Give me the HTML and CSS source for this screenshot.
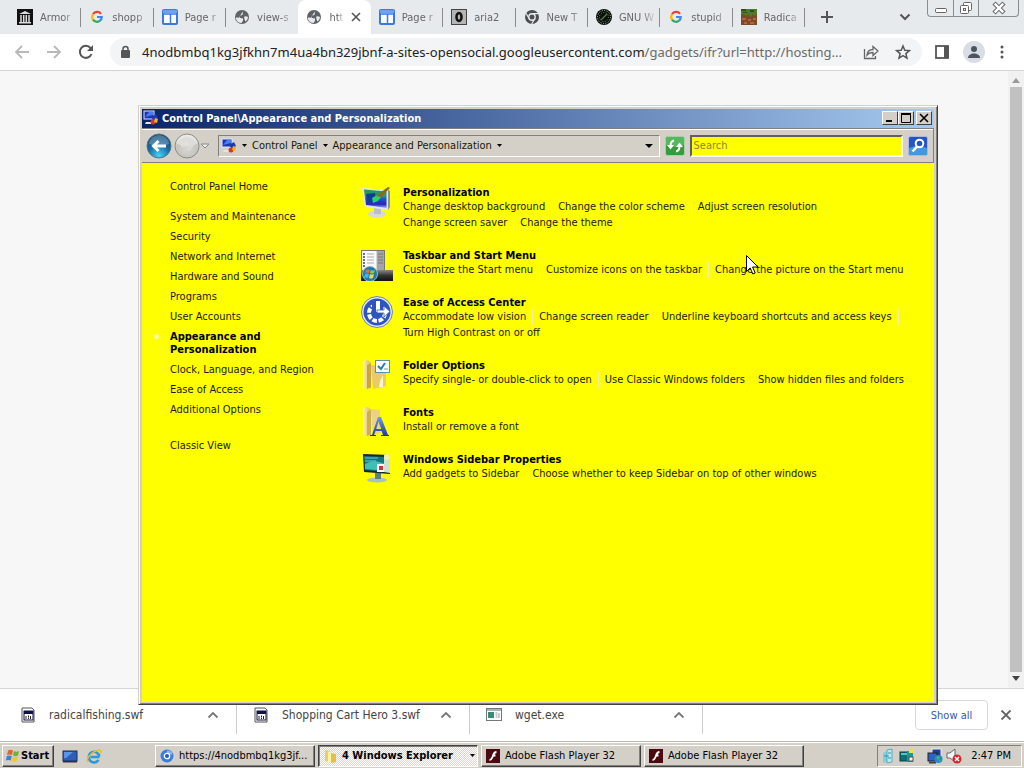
FILE: index.html
```
<!DOCTYPE html>
<html lang="en">
<head>
    <meta charset="UTF-8">
    <meta name="viewport" content="width=device-width, initial-scale=1.0">
    <title>Control Panel</title>
    <link rel="stylesheet" href="styles.css">
</head>
<body>
    <!-- Shared icons -->
    <svg class="defs" aria-hidden="true">
        <defs>
            <linearGradient id="wallpaper" x1="0" y1="0" x2="0" y2="1">
                <stop offset="0" stop-color="#1b9a4c" />
                <stop offset="0.35" stop-color="#2f9a6a" />
                <stop offset="0.5" stop-color="#2255c8" />
                <stop offset="0.8" stop-color="#2a22c0" />
                <stop offset="1" stop-color="#8fb8f5" />
            </linearGradient>
            <linearGradient id="folderLight" x1="0" y1="0" x2="1" y2="0">
                <stop offset="0" stop-color="#fdf3b8" />
                <stop offset="1" stop-color="#d9b64c" />
            </linearGradient>
            <linearGradient id="letter" x1="0" y1="0" x2="0" y2="1">
                <stop offset="0" stop-color="#6f9be8" />
                <stop offset="1" stop-color="#1f35a8" />
            </linearGradient>
            <linearGradient id="metal" x1="0" y1="0" x2="0" y2="1">
                <stop offset="0" stop-color="#8a8a80" />
                <stop offset="0.5" stop-color="#333333" />
                <stop offset="1" stop-color="#111111" />
            </linearGradient>
            <radialGradient id="orb" cx="0.5" cy="0.9" r="0.9">
                <stop offset="0" stop-color="#43d5f5" />
                <stop offset="0.5" stop-color="#1a6da8" />
                <stop offset="1" stop-color="#12406a" />
            </radialGradient>
            <radialGradient id="silver" cx="0.5" cy="0.6" r="0.6">
                <stop offset="0" stop-color="#d8d6d0" />
                <stop offset="0.7" stop-color="#c6c4be" />
                <stop offset="1" stop-color="#efefef" />
            </radialGradient>
            <symbol id="i-google" viewBox="-2 -2 20 20">
                <path d="M13 4A6 6 0 0 0 3 4.600" fill="none" stroke="#ea4335" stroke-width="2.800" />
                <path d="M3 4.600A6 6 0 0 0 3 11.400" fill="none" stroke="#fbbc05" stroke-width="2.800" />
                <path d="M3 11.400A6 6 0 0 0 11.800 12.600" fill="none" stroke="#34a853" stroke-width="2.800" />
                <path d="M11.800 12.600A6 6 0 0 0 13.900 8H8" fill="none" stroke="#4285f4" stroke-width="2.800" />
            </symbol>
            <symbol id="i-page" viewBox="0 0 16 16">
                <rect x="1" y="1" width="14" height="14" rx="1" fill="#fff" stroke="#3b78e0" stroke-width="2" />
                <path d="M0 5h16M8.500 5v10" stroke="#3b78e0" stroke-width="1.500" />
                <path d="M1 2.500h14" stroke="#6fa0f2" stroke-width="3" />
            </symbol>
            <symbol id="i-globe" viewBox="0 0 16 16">
                <circle cx="8" cy="8" r="7" fill="#5f6368" />
                <path d="M9 2c-1 1.500.5 2-.5 3.500S5 6 5.500 8s3 .5 3.500 2-.5 2.500-1.500 4C4 14 1.700 11 2 8.500c1.500 0 2 .5 3 0M10.500 7.500c1.500-.5 2.500 0 3.500.5-.3 2-1 3.500-2.500 4.500C11 11 9.500 9 10.500 7.500z" fill="#e8eaed" />
            </symbol>
            <symbol id="i-swf" viewBox="0 0 16 16">
                <path d="M2 1h10l2 2v12H2z" fill="#fff" stroke="#555" />
                <rect x="4" y="4" width="9" height="9" fill="#fff" stroke="#10104a" />
                <path d="M4 5.500h9" stroke="#10104a" stroke-width="3" />
                <path d="M6 9v3M8.500 8.500v2M10.500 9v3M8 11.500h1" stroke="#222" />
            </symbol>
            <symbol id="i-up" viewBox="0 0 12 8">
                <path d="M1.500 6.500L6 2l4.500 4.500" fill="none" stroke="#777" stroke-width="1.800" />
            </symbol>
            <symbol id="i-flash" viewBox="0 0 14 14">
                <rect width="14" height="14" fill="#4a0a10" />
                <path d="M10.500 3C7.500 3 7.500 5.500 6.500 8S5 11 3.500 11M6.500 6.500h3" fill="none" stroke="#fff" stroke-width="1.800" />
            </symbol>
            <symbol id="i-cpl" viewBox="0 0 16 16">
                <rect x="1" y="1" width="10" height="8" fill="#1a35b8" stroke="#dfe6f5" />
                <path d="M2 7l4-5h4v3z" fill="#4a7bf0" />
                <path d="M3 12h8l1 2H2z" fill="#e4e4ea" />
                <path d="M8 7l5-3 2 4-4 3z" fill="#2238b0" />
                <circle cx="10" cy="12" r="2.500" fill="#d8352b" />
                <path d="M12 8l3 1-1 4-3-1z" fill="#f0b428" />
            </symbol>
            <symbol id="i-flag" viewBox="0 0 16 16">
                <path d="M3 2.500q2.500-1.500 5 0L7 7Q4.500 5.800 2 7z" fill="#e8622a" />
                <path d="M9 3q2.500 1.500 5 0l-1 4.500q-2.500 1.500-5 0z" fill="#6cb33e" />
                <path d="M1.800 8q2.500-1.200 5 0l-1 4.500q-2.500-1.200-5 0z" fill="#3b82d8" />
                <path d="M7.800 8.500q2.500 1.500 5 0l-1 4.500q-2.500 1.500-5 0z" fill="#f5c52c" />
            </symbol>
        </defs>
    </svg>

    <div class="desktop">
        <div class="browser">
            <header class="tab-bar">
                <nav class="tabs">
                    <a class="tab" href="#">
                        <svg class="favicon" viewBox="0 0 16 16"><rect width="16" height="16" fill="#111" /><path d="M2 5l6-3 6 3zM2 13h12v1.500H2z" fill="#ddd" /><path d="M4 6v7M6.700 6v7M9.300 6v7M12 6v7" stroke="#ddd" stroke-width="1.500" /></svg>
                        <span>Armor</span>
                    </a>
                    <a class="tab" href="#"><svg class="favicon"><use href="#i-google" /></svg><span>shopp</span></a>
                    <a class="tab" href="#"><svg class="favicon"><use href="#i-page" /></svg><span>Page r</span></a>
                    <a class="tab" href="#"><svg class="favicon"><use href="#i-globe" /></svg><span>view-s</span></a>
                    <a class="tab active" href="#">
                        <svg class="favicon"><use href="#i-globe" /></svg><span>htt</span>
                        <svg class="tab-close" viewBox="0 0 10 10"><path d="M1 1l8 8M9 1L1 9" stroke="#555" stroke-width="1.600" /></svg>
                    </a>
                    <a class="tab" href="#"><svg class="favicon"><use href="#i-page" /></svg><span>Page r</span></a>
                    <a class="tab" href="#">
                        <svg class="favicon" viewBox="0 0 16 16"><rect x="0.500" y="0.500" width="15" height="15" fill="#b4b4b4" stroke="#444" /><ellipse cx="8" cy="8" rx="2.500" ry="4" fill="none" stroke="#111" stroke-width="2.500" /></svg>
                        <span>aria2</span>
                    </a>
                    <a class="tab" href="#">
                        <svg class="favicon" viewBox="0 0 16 16"><circle cx="8" cy="8" r="7" fill="#4a4d52" /><circle cx="8" cy="8" r="3.200" fill="#4a4d52" stroke="#e8eaed" stroke-width="1.400" /><path d="M8 4.700h6.500M5.200 9.700L2 4.200M10.800 9.700L7.600 15" stroke="#e8eaed" stroke-width="1.200" /></svg>
                        <span>New T</span>
                    </a>
                    <a class="tab" href="#">
                        <svg class="favicon" viewBox="0 0 16 16"><circle cx="8" cy="8" r="8" fill="#0a0f0a" /><circle cx="8" cy="8" r="6.500" fill="none" stroke="#b9c9b4" stroke-dasharray="1 1.500" /><circle cx="8" cy="8" r="4.500" fill="none" stroke="#6f8a6a" stroke-dasharray="1 1.500" /><path d="M5 11l6-6" stroke="#4d7a48" stroke-width="1.500" /></svg>
                        <span>GNU W</span>
                    </a>
                    <a class="tab" href="#"><svg class="favicon"><use href="#i-google" /></svg><span>stupid</span></a>
                    <a class="tab" href="#">
                        <svg class="favicon" viewBox="0 0 16 16"><rect width="16" height="16" fill="#7a4a2a" /><path d="M0 0h16v5l-2 2-2-2-2 3-3-3-2 2-2-2-3 1z" fill="#4e7a2a" /><path d="M0 0h5v2H0zM9 1h4v2H9zM2 3h4v1H2z" fill="#2f4f1c" /><path d="M1 9h4v2H1zM7 10h3v2H7zM12 9h3v2h-3zM3 13h3v2H3zM9 13h4v2H9z" fill="#b4653a" /></svg>
                        <span>Radica</span>
                    </a>
                </nav>
                <div class="tab-tools">
                    <button class="icon-button" aria-label="New tab"><svg width="14" height="14" viewBox="0 0 14 14"><path d="M7 1v12M1 7h12" stroke="#555" stroke-width="2" /></svg></button>
                    <button class="icon-button" aria-label="Search tabs"><svg width="12" height="8" viewBox="0 0 12 8"><path d="M1.500 1.500L6 6l4.500-4.500" fill="none" stroke="#555" stroke-width="2" /></svg></button>
                    <div class="window-controls">
                        <button aria-label="Minimize"><svg width="14" height="16" viewBox="0 0 14 16"><rect x="1.500" y="8.500" width="11" height="4" rx="1" fill="#fff" stroke="#666" /></svg></button>
                        <button aria-label="Restore"><svg width="14" height="16" viewBox="0 0 14 16"><rect x="4.500" y="2.500" width="8" height="8" rx="1" fill="#fff" stroke="#666" /><rect x="1.500" y="5.500" width="8" height="8" rx="1" fill="#fff" stroke="#666" /><rect x="4.500" y="8.500" width="2" height="2" fill="#fff" stroke="#666" /></svg></button>
                        <button aria-label="Close"><svg width="14" height="16" viewBox="0 0 14 16"><path d="M2 3l10 10M12 3L2 13" stroke="#666" stroke-width="4.500" /><path d="M2.700 3.700l8.600 8.600M11.300 3.700l-8.600 8.600" stroke="#fff" stroke-width="2.400" /></svg></button>
                    </div>
                </div>
            </header>

            <div class="toolbar">
                <button class="icon-button" aria-label="Back"><svg width="16" height="16" viewBox="0 0 16 16"><path d="M15 8H2M8 2L2 8l6 6" fill="none" stroke="#b8b8b8" stroke-width="1.800" /></svg></button>
                <button class="icon-button" aria-label="Forward"><svg width="16" height="16" viewBox="0 0 16 16"><path d="M1 8h13M8 2l6 6-6 6" fill="none" stroke="#b8b8b8" stroke-width="1.800" /></svg></button>
                <button class="icon-button" aria-label="Reload"><svg width="16" height="16" viewBox="0 0 16 16"><path d="M13.500 10A6 6 0 1 1 12.500 4" fill="none" stroke="#555" stroke-width="2" /><path d="M15 1v6H9z" fill="#555" /></svg></button>
                <div class="omnibox">
                    <svg width="12" height="14" viewBox="0 0 12 14"><rect x="1" y="5" width="9" height="8" rx="1" fill="#555" /><path d="M3 6V4a2.500 2.500 0 0 1 5 0v2" fill="none" stroke="#555" stroke-width="1.500" /></svg>
                    <div class="url" role="textbox" aria-label="Address"><b>4nodbmbq1kg3jfkhn7m4ua4bn329jbnf-a-sites-opensocial.googleusercontent.com</b>/gadgets/ifr?url=http://hosting...</div>
                    <button class="icon-button" aria-label="Share"><svg width="16" height="16" viewBox="0 0 16 16"><path d="M1.500 5v9.500h11V12" fill="none" stroke="#666" stroke-width="1.300" /><path d="M4 11c.5-4 3-5.500 6-5.500V2.500L15 7l-5 4.500V8.500C7 8.500 5.500 9 4 11z" fill="none" stroke="#666" stroke-width="1.300" /></svg></button>
                    <button class="icon-button" aria-label="Bookmark"><svg width="16" height="16" viewBox="0 0 16 16"><path d="M8 2l1.800 4.200 4.600.4-3.500 3 1.100 4.500L8 11.700 4 14.100l1.100-4.500-3.500-3 4.600-.4z" fill="none" stroke="#555" stroke-width="1.500" /></svg></button>
                </div>
                <button class="icon-button" aria-label="Side panel"><svg width="14" height="14" viewBox="0 0 14 14"><rect x="1" y="1" width="12" height="12" fill="#fff" stroke="#555" stroke-width="1.800" /><path d="M9 1h5v12H9z" fill="#555" /></svg></button>
                <button class="icon-button avatar" aria-label="Profile"><svg width="14" height="14" viewBox="0 0 14 14"><circle cx="7" cy="4" r="3" fill="#4d5460" /><path d="M1 13c0-6 12-6 12 0z" fill="#4d5460" /></svg></button>
                <button class="icon-button" aria-label="Menu"><svg width="4" height="14" viewBox="0 0 4 14"><circle cx="2" cy="2" r="1.500" fill="#555" /><circle cx="2" cy="7" r="1.500" fill="#555" /><circle cx="2" cy="12" r="1.500" fill="#555" /></svg></button>
            </div>

            <div class="page">
                <div class="scrollbar">
                    <svg width="8" height="5" viewBox="0 0 8 5"><path d="M0 5l4-5 4 5z" fill="#999" /></svg>
                    <div class="thumb"></div>
                    <svg width="8" height="5" viewBox="0 0 8 5"><path d="M0 0h8L4 5z" fill="#444" /></svg>
                </div>
            </div>

            <div class="downloads">
                <button class="download"><svg class="file-icon"><use href="#i-swf" /></svg><span>radicalfishing.swf</span><svg class="up"><use href="#i-up" /></svg></button>
                <button class="download"><svg class="file-icon"><use href="#i-swf" /></svg><span>Shopping Cart Hero 3.swf</span><svg class="up"><use href="#i-up" /></svg></button>
                <button class="download">
                    <svg class="file-icon" viewBox="0 0 16 16"><rect x="0.500" y="1.500" width="15" height="12" fill="#fff" stroke="#777" /><path d="M1 3h14" stroke="#a9b4bd" stroke-width="2" /><rect x="2" y="5" width="6" height="6" fill="#3a8a78" /><path d="M9.500 6h2M9.500 8h2M9.500 10h2M13 6v5" stroke="#999" /></svg>
                    <span>wget.exe</span><svg class="up"><use href="#i-up" /></svg>
                </button>
                <button class="show-all">Show all</button>
                <button class="icon-button" aria-label="Close downloads"><svg width="12" height="12" viewBox="0 0 12 12"><path d="M1.500 1.500l9 9M10.500 1.500l-9 9" stroke="#666" stroke-width="1.800" /></svg></button>
            </div>
        </div>

        <footer class="taskbar">
            <button class="start"><svg width="16" height="16"><use href="#i-flag" /></svg>Start</button>
            <div class="quick-launch">
                <svg width="16" height="16" viewBox="0 0 16 16"><rect x="1" y="3" width="14" height="10" fill="#2c5fb8" stroke="#1a2f55" /><path d="M2 4h9L4 10H2z" fill="#5a95e8" /><path d="M1 13h14v1.500H1z" fill="#333" /></svg>
                <svg width="16" height="16" viewBox="0 0 16 16"><path d="M13.500 9H4.500M13.300 8.500A5.300 5.300 0 1 0 12.500 12" fill="none" stroke="#2b9ad8" stroke-width="2.600" /><path d="M2 14C-1 10 9 1 14.500 2.500 15.500 3 15 4 14.500 5" fill="none" stroke="#e8b93a" stroke-width="1.500" /></svg>
            </div>
            <div class="tasks">
                <button class="task"><svg width="14" height="14" viewBox="0 0 14 14"><circle cx="7" cy="7" r="6.500" fill="#3a7de0" /><path d="M7 1.500a5.500 5.500 0 0 1 5.500 4H7z" fill="#8cbcf7" /><circle cx="7" cy="7" r="2.700" fill="#1f5ac0" stroke="#fff" stroke-width="1.300" /></svg><span>https://4nodbmbq1kg3jf...</span></button>
                <button class="task pressed"><svg width="14" height="14" viewBox="0 0 14 14"><path d="M2 1l5 1v11l-5-1z" fill="#e8cf6a" /><path d="M5 3l4-1v10l-4 2z" fill="#fdf3b0" /><path d="M8 4l5 1v8l-5 1z" fill="#e3c04e" /></svg><span>4 Windows Explorer</span><svg class="more" width="5" height="3" viewBox="0 0 5 3"><path d="M0 0h5L2.500 3z" /></svg></button>
                <button class="task"><svg width="14" height="14"><use href="#i-flash" /></svg><span>Adobe Flash Player 32</span></button>
                <button class="task"><svg width="14" height="14"><use href="#i-flash" /></svg><span>Adobe Flash Player 32</span></button>
            </div>
            <div class="tray">
                <svg width="16" height="16" viewBox="0 0 16 16"><path d="M3 5l6-3v11l-6 2z" fill="#7fcfe0" /><path d="M7 2l5-1v13l-5 1z" fill="#b9ecf4" stroke="#5aa9bb" /><path d="M4 8h5M8 5h3M8 10h3" stroke="#3e8ea4" /></svg>
                <svg width="16" height="16" viewBox="0 0 16 16"><rect x="1" y="4" width="9" height="9" fill="#0d6f78" stroke="#083d45" /><path d="M2 6h6" stroke="#54c6c4" stroke-width="2" /><rect x="8" y="3" width="6" height="11" fill="#1c9a8a" /><rect x="10" y="9" width="4" height="4" fill="#f3f3f3" stroke="#555" /><path d="M10 1h5v4h-5z" fill="#f4df45" /></svg>
                <svg class="tray-network" width="16" height="16" viewBox="0 0 16 16"><rect x="5" y="1" width="9" height="8" fill="#1c3f9a" stroke="#eee" /><rect x="1" y="5" width="9" height="8" fill="#2d62c8" stroke="#222" /><path d="M2 14.500h7" stroke="#444" stroke-width="2" /><circle cx="11.500" cy="11" r="4" fill="#2488d8" /><path d="M9 9l3-1 1 2-2 2zM12 12l2 0-1 2z" fill="#48b848" /></svg>
                <svg width="16" height="16" viewBox="0 0 16 16"><path d="M1 5h3l5-4v13l-5-4H1z" fill="#f5f5f5" stroke="#666" /><circle cx="11" cy="11" r="4.500" fill="#d8242a" /><path d="M9 9l4 4M13 9l-4 4" stroke="#fff" stroke-width="1.500" /></svg>
                <span class="clock">2:47 PM</span>
            </div>
        </footer>

        <!-- Control Panel window -->
        <section class="window">
            <div class="title-bar">
                <svg width="16" height="16"><use href="#i-cpl" /></svg>
                <h1>Control Panel\Appearance and Personalization</h1>
                <button class="caption" aria-label="Minimize"><svg width="10" height="10" viewBox="0 0 10 10"><path d="M1 8h6" stroke="#000" stroke-width="2" /></svg></button>
                <button class="caption" aria-label="Maximize"><svg width="10" height="10" viewBox="0 0 10 10"><path d="M0.500 1.500v8h9v-8M0 1h10" fill="none" stroke="#000" /><path d="M0 1h10" stroke="#000" stroke-width="2" /></svg></button>
                <button class="caption close" aria-label="Close"><svg width="10" height="10" viewBox="0 0 10 10"><path d="M1 1l8 8M9 1L1 9" stroke="#000" stroke-width="1.600" /></svg></button>
            </div>

            <div class="nav-bar">
                <button class="nav-button" aria-label="Back"><svg width="26" height="26" viewBox="0 0 26 26"><circle cx="13" cy="13" r="12" fill="url(#orb)" stroke="#5b7485" /><path d="M3 11a10 9 0 0 1 20 0q-10 4-20 0z" fill="#fff" opacity="0.250" /><path d="M20 13H8M12.500 8l-5 5 5 5" fill="none" stroke="#fff" stroke-width="3" /></svg></button>
                <button class="nav-button" aria-label="Forward"><svg width="26" height="26" viewBox="0 0 26 26"><circle cx="13" cy="13" r="12" fill="url(#silver)" stroke="#8a8a86" /><path d="M3 11a10 9 0 0 1 20 0q-10 4-20 0z" fill="#fff" opacity="0.400" /><path d="M7 13h10M14 8.500l4.500 4.500-4.500 4.500" fill="none" stroke="#dddbd6" stroke-width="2" /></svg></button>
                <button class="nav-button" aria-label="Recent pages"><svg width="10" height="6" viewBox="0 0 10 6"><path d="M1 1h8L5 5z" fill="#eee" stroke="#888" /></svg></button>
                <div class="address">
                    <svg width="16" height="16"><use href="#i-cpl" /></svg>
                    <svg class="arrow" viewBox="0 0 5 3"><path d="M0 0h5L2.500 3z" /></svg>
                    <a href="#">Control Panel</a>
                    <svg class="arrow" viewBox="0 0 5 3"><path d="M0 0h5L2.500 3z" /></svg>
                    <a href="#">Appearance and Personalization</a>
                    <svg class="arrow" viewBox="0 0 5 3"><path d="M0 0h5L2.500 3z" /></svg>
                    <svg class="drop" width="8" height="4" viewBox="0 0 8 4"><path d="M0 0h8L4 4z" /></svg>
                </div>
                <button class="nav-button" aria-label="Refresh"><svg width="20" height="20" viewBox="0 0 20 20"><rect x="0.500" y="0.500" width="19" height="19" rx="2" fill="#2f9e3c" stroke="#a9cfa9" /><path d="M1 1h18v8q-9 4-18 0z" fill="#7fd07f" opacity="0.500" /><path d="M9 4.500C6.500 5 5.500 7 5.500 10M11 15.500c2.500-.5 3.500-2.500 3.500-5.500" fill="none" stroke="#fff" stroke-width="2" /><path d="M2 9h7l-3.500 4.500zM11 11h7l-3.500-4.500z" fill="#fff" /></svg></button>
                <input class="search" type="text" placeholder="Search" aria-label="Search">
                <button class="nav-button" aria-label="Go"><svg width="20" height="20" viewBox="0 0 20 20"><rect x="0.500" y="0.500" width="19" height="19" rx="2" fill="#2554c4" stroke="#a9b9e0" /><path d="M1 12q9-4 18 0v7H1z" fill="#4fb4ee" opacity="0.700" /><circle cx="11.500" cy="7.500" r="3.800" fill="none" stroke="#fff" stroke-width="2" /><path d="M9 10.500l-4.500 5" stroke="#fff" stroke-width="2.500" /></svg></button>
            </div>

            <div class="content">
                <nav class="side">
                    <a class="home" href="#">Control Panel Home</a>
                    <a href="#">System and Maintenance</a>
                    <a href="#">Security</a>
                    <a href="#">Network and Internet</a>
                    <a href="#">Hardware and Sound</a>
                    <a href="#">Programs</a>
                    <a href="#">User Accounts</a>
                    <a class="current" href="#">Appearance and<br>Personalization</a>
                    <a href="#">Clock, Language, and Region</a>
                    <a href="#">Ease of Access</a>
                    <a href="#">Additional Options</a>
                    <a class="classic" href="#">Classic View</a>
                </nav>

                <main class="categories">
                    <section class="category">
                        <svg class="category-icon" viewBox="0 0 32 32"><ellipse cx="16" cy="28" rx="9" ry="3.500" fill="#d5d8de" /><path d="M13 22h7v6h-7z" fill="#b9bfca" /><path d="M1 2l26 2v20L4 21z" fill="#dfe6ef" /><path d="M27 4l2 1v16l-2 3z" fill="#8b93a0" /><path d="M3 3.500l22.500 2v16.500L5 19z" fill="url(#wallpaper)" /><path d="M5 8l9-1 1 6-5 4-4-2z" fill="#123a9a" /><path d="M11 12l5-3 4 2-3 4-5 2z" fill="#2fd064" /><path d="M15 10L27 1l2 1-9 9z" fill="#87691f" /></svg>
                        <div>
                            <h2><a href="#">Personalization</a></h2>
                            <ul>
                                <li><a href="#">Change desktop background</a></li>
                                <li><a href="#">Change the color scheme</a></li>
                                <li><a href="#">Adjust screen resolution</a></li>
                                <li><a href="#">Change screen saver</a></li>
                                <li><a href="#">Change the theme</a></li>
                            </ul>
                        </div>
                    </section>
                    <section class="category">
                        <svg class="category-icon" viewBox="0 0 32 32"><rect x="0.500" y="1.500" width="23" height="22" fill="#d9d9d6" stroke="#777" /><rect x="1" y="2" width="14" height="20" fill="#fafafa" /><path d="M2 5h2M2 8h2M2 11h2M2 14h2M2 17h2" stroke="#444" stroke-width="1.500" /><path d="M6 5h7M6 8h7M6 11h7M6 14h7" stroke="#aaa" /><path d="M16 2h7v20h-7z" fill="#a5a5a8" /><path d="M17 5h5M17 8h5M17 11h5M17 14h5" stroke="#777" /><rect y="21" width="32" height="11" fill="url(#metal)" /><circle cx="9" cy="25" r="7.500" fill="#1e78b0" stroke="#9bb6c0" /><path d="M5 21q2-1 4 0l-1 3q-2-1-4 0z" fill="#f0702c" /><path d="M10 21q2 1 4 0l-1 3q-2 1-4 0z" fill="#7fd052" /><path d="M4 25q2-1 4 0l-1 4q-2-1-4 0z" fill="#3cb6f0" /><path d="M9 25q2 1 4 0l-1 4q-2 1-4 0z" fill="#f8d440" /></svg>
                        <div>
                            <h2><a href="#">Taskbar and Start Menu</a></h2>
                            <ul>
                                <li><a href="#">Customize the Start menu</a></li>
                                <li><a href="#">Customize icons on the taskbar</a></li>
                                <li><a href="#">Change the picture on the Start menu</a></li>
                            </ul>
                        </div>
                    </section>
                    <section class="category">
                        <svg class="category-icon" viewBox="0 0 32 32"><circle cx="16" cy="16" r="15.500" fill="#dfe8fa" stroke="#7484a8" /><circle cx="16" cy="16" r="13.500" fill="#2d55bd" /><circle cx="16" cy="17" r="8" fill="none" stroke="#fff" stroke-width="4" stroke-dasharray="4.600 1.700" /><path d="M11 4h11v12H11z" fill="#2d55bd" /><path d="M17 5v11" stroke="#fff" stroke-width="4" /><path d="M16 14h7v-4l6 5.500-6 5.500v-4h-7z" fill="#fff" stroke="#2d55bd" stroke-width="0.800" /></svg>
                        <div>
                            <h2><a href="#">Ease of Access Center</a></h2>
                            <ul>
                                <li><a href="#">Accommodate low vision</a></li>
                                <li><a href="#">Change screen reader</a></li>
                                <li><a href="#">Underline keyboard shortcuts and access keys</a></li>
                                <li><a href="#">Turn High Contrast on or off</a></li>
                            </ul>
                        </div>
                    </section>
                    <section class="category">
                        <svg class="category-icon" viewBox="0 0 32 32"><path d="M10 6l15 2v19l-13 3z" fill="#e9cb6a" /><path d="M2 2l5-1 3 3v25l-5 1-3-3z" fill="url(#folderLight)" /><path d="M6 6l4-2v24l-4 2z" fill="#c9a640" /><path d="M19 22l3-6v12h-4z" fill="#fff6cf" /><rect x="14.500" y="1.500" width="14" height="12" fill="#fff" stroke="#5d8fb5" /><path d="M17 7l3 3 4-6" fill="none" stroke="#1b7fc0" stroke-width="2" /><path d="M23 10h4" stroke="#88a" /></svg>
                        <div>
                            <h2><a href="#">Folder Options</a></h2>
                            <ul>
                                <li><a href="#">Specify single- or double-click to open</a></li>
                                <li><a href="#">Use Classic Windows folders</a></li>
                                <li><a href="#">Show hidden files and folders</a></li>
                            </ul>
                        </div>
                    </section>
                    <section class="category">
                        <svg class="category-icon" viewBox="0 0 32 32"><path d="M10 3l9 1v23l-7 2z" fill="#ecd283" /><path d="M2 2l5-1 3 3v25l-5 1-3-3z" fill="url(#folderLight)" /><path d="M6 6l4-2v24l-4 2z" fill="#cfae4c" /><path d="M17 11h3l7 18h1v1h-8v-1h2l-1.500-4h-6L13 29h2v1H9v-1h2zM17.500 15.500L15.200 23h5z" fill="url(#letter)" fill-rule="evenodd" /></svg>
                        <div>
                            <h2><a href="#">Fonts</a></h2>
                            <ul>
                                <li><a href="#">Install or remove a font</a></li>
                            </ul>
                        </div>
                    </section>
                    <section class="category">
                        <svg class="category-icon" viewBox="0 0 32 32"><ellipse cx="16" cy="27" rx="10" ry="2.500" fill="#a8c4c0" /><path d="M14 20h6v6h-6z" fill="#5d7f80" /><path d="M2 1l27 1v19L3 19z" fill="#16282c" /><path d="M3 3l24 1v15L4 17z" fill="#15757e" /><path d="M4 11q10-6 21 1v6L4 16z" fill="#3fc0b0" /><path d="M4 5h13M4 8h11" stroke="#5fd0d8" /><path d="M23 2h6v18l-6-1z" fill="#cfe0cc" /><circle cx="26" cy="4" r="3" fill="#f4efb0" /><rect x="16" y="11" width="7" height="8" fill="#fff" /><rect x="18" y="13" width="4" height="4" fill="#d8322a" /></svg>
                        <div>
                            <h2><a href="#">Windows Sidebar Properties</a></h2>
                            <ul>
                                <li><a href="#">Add gadgets to Sidebar</a></li>
                                <li><a href="#">Choose whether to keep Sidebar on top of other windows</a></li>
                            </ul>
                        </div>
                    </section>
                </main>
            </div>
        </section>

        <svg class="cursor" viewBox="0 0 13 21"><path d="M0.500 0.500v16l3.700-3.500 2.600 6 2.400-1-2.600-6h5.400z" fill="#fff" stroke="#000" /></svg>
    </div>
</body>
</html>
```
FILE: styles.css
```
* {
    box-sizing: border-box;
}
body {
    margin: 0;
    font-family: "DejaVu Sans Condensed", "DejaVu Sans", sans-serif;
    font-size: 11px;
    color: #1a1a00;
}
a {
    color: inherit;
    text-decoration: none;
}
button {
    font: inherit;
    color: inherit;
    padding: 0;
    border: none;
    background: none;
}
svg {
    display: block;
    flex-shrink: 0;
}
.defs {
    position: absolute;
    width: 0;
    height: 0;
}
.desktop {
    position: relative;
    display: flex;
    flex-direction: column;
    height: 100vh;
    overflow: hidden;
}
.browser {
    flex: 1;
    display: flex;
    flex-direction: column;
    min-height: 0;
    background: #fff;
}

/* Tabs */
.tab-bar {
    display: flex;
    height: 34px;
    padding-left: 9px;
    background: #e7eaed;
}
.tabs {
    flex: 1;
    display: grid;
    grid-template-columns: repeat(11, minmax(0, 1fr));
}
.tab {
    display: flex;
    align-items: center;
    gap: 7px;
    padding: 0 3px 0 8px;
    color: #666;
    position: relative;
}
.tab::after {
    content: "";
    position: absolute;
    right: 0;
    top: 8px;
    width: 1px;
    height: 19px;
    background: #8a8a8a;
}
.tab.active::after,
.tab:nth-child(4)::after {
    display: none;
}
.tab span {
    flex: 1;
    overflow: hidden;
    white-space: nowrap;
    mask-image: linear-gradient(to right, #000 60%, transparent);
}
.tab.active {
    padding-right: 10px;
    background: #fff;
    border-radius: 8px 8px 0 0;
}
.tab-close {
    width: 10px;
    height: 10px;
}
.favicon {
    width: 16px;
    height: 16px;
}
.tab-tools {
    width: 219px;
    display: flex;
    align-items: center;
    padding: 0 5px 0 15px;
}
.icon-button {
    display: flex;
    align-items: center;
    justify-content: center;
}
.window-controls {
    align-self: flex-start;
    display: flex;
    width: 92px;
    height: 17px;
    margin-left: 16px;
    border: 1px solid #8a8d90;
    border-top: none;
    border-radius: 0 0 4px 4px;
}
.tab-tools .icon-button + .icon-button {
    margin-left: auto;
}
.window-controls button {
    width: 25px;
    display: flex;
    justify-content: center;
}
.window-controls button + button {
    border-left: 1px solid #8a8d90;
}
.window-controls button:last-child {
    flex: 1;
}

/* Address bar */
.toolbar {
    display: flex;
    align-items: center;
    gap: 16px;
    height: 37px;
    padding: 0 20px 0 14px;
    border-bottom: 1px solid #d5d5d5;
}
.omnibox {
    flex: 1;
    min-width: 0;
    display: flex;
    align-items: center;
    gap: 16px;
    height: 28px;
    margin-right: -3px;
    padding: 0 11px 0 10px;
    border-radius: 14px;
    background: #f3f4f5;
}
.url {
    flex: 1;
    margin-left: -6px;
    overflow: hidden;
    white-space: nowrap;
    font-family: "Noto Sans", sans-serif;
    font-size: 13px;
    color: #6a6a6a;
}
.url b {
    font-weight: normal;
    color: #222;
}
.avatar {
    width: 22px;
    height: 22px;
    margin: 0 -1px 0 -2px;
    border-radius: 50%;
    background: #dadde5;
}

/* Page area */
.page {
    flex: 1;
    display: flex;
    justify-content: flex-end;
    background: #f7f7f7;
}
.scrollbar {
    width: 16px;
    display: flex;
    flex-direction: column;
    align-items: center;
    gap: 4px;
    padding: 7px 0;
    background: #f1f1f1;
}
.thumb {
    flex: 1;
    width: 12px;
    background: #c1c1c1;
}

/* Downloads */
.downloads {
    display: flex;
    align-items: center;
    height: 53px;
    padding: 0 12px 0 4px;
    border-top: 1px solid #d5d5d5;
    font-size: 12px;
    color: #444;
}
.download {
    display: flex;
    align-items: center;
    gap: 13px;
    width: 233px;
    height: 38px;
    padding: 0 17px 0 16px;
    border-right: 1px solid #ccc;
    text-align: left;
}
.download span {
    flex: 1;
}
.file-icon {
    width: 16px;
    height: 16px;
}
.up {
    width: 12px;
    height: 8px;
}
.show-all {
    width: 73px;
    height: 30px;
    margin-left: auto;
    margin-right: 12px;
    border: 1px solid #d5d8dd;
    border-radius: 4px;
    font-size: 11px;
    color: #3556b4;
}

/* Taskbar */
.taskbar {
    display: flex;
    align-items: center;
    height: 27px;
    padding: 1px 2px 0;
    border-top: 1px solid #b9b5ad;
    box-shadow: inset 0 1px #fff;
    background: #d4d0c8;
    color: #000;
}
.start,
.task {
    display: flex;
    align-items: center;
    height: 22px;
    border: 1px solid;
    border-color: #fff #404040 #404040 #fff;
    box-shadow: inset -1px -1px #808080;
    white-space: nowrap;
}
.start {
    width: 52px;
    padding-left: 2px;
    font-weight: bold;
}
.quick-launch {
    display: flex;
    gap: 8px;
    width: 101px;
    padding-left: 8px;
}
.tasks {
    flex: 1;
    display: flex;
    gap: 3px;
}
.task {
    gap: 5px;
    width: 160px;
    padding: 0 4px;
    text-align: left;
}
.task span {
    flex: 1;
}
.task.pressed {
    padding-right: 2px;
    border-color: #404040 #fff #fff #404040;
    box-shadow: inset 1px 1px #808080;
    background: repeating-conic-gradient(#fff 0 25%, #d9d6cf 0 50%) 0 0 / 2px 2px;
    font-weight: bold;
}
.tray {
    display: flex;
    align-items: center;
    gap: 3px;
    height: 22px;
    padding: 0 10px 0 2px;
    border: 1px solid;
    border-color: #808080 #fff #fff #808080;
}
.tray-network {
    margin-left: 9px;
}
.clock {
    margin-left: 6px;
}

/* Control Panel window */
.window {
    position: absolute;
    top: 105px;
    right: 86px;
    bottom: 63px;
    left: 138px;
    display: flex;
    flex-direction: column;
    padding: 2px;
    border: 1px solid;
    border-color: #d4d0c8 #404040 #404040 #d4d0c8;
    box-shadow: inset 1px 1px #fff, inset -1px -1px #808080;
    background: #d4d0c8;
}
.window > * {
    margin: 0 1px;
}
.title-bar {
    display: flex;
    align-items: center;
    height: 19px;
    margin-top: 1px;
    padding: 0 2px 1px 1px;
    background: linear-gradient(to right, #0a246a, #a6caf0);
}
.title-bar h1 {
    flex: 1;
    margin: 0 0 0 3px;
    font-size: 11px;
    color: #fff;
}
.caption {
    display: flex;
    align-items: center;
    justify-content: center;
    width: 16px;
    height: 14px;
    border: 1px solid;
    border-color: #fff #404040 #404040 #fff;
    background: #d4d0c8;
}
.close {
    margin-left: 2px;
}
.nav-bar {
    display: flex;
    align-items: center;
    gap: 5px;
    height: 35px;
    padding: 0 5px 0 4px;
    border: 1px solid #808080;
    border-width: 1px 1px 1px 0;
    box-shadow: inset 0 1px #fff;
}
.nav-button:nth-child(2) {
    margin-left: -3px;
}
.nav-button:nth-child(3) {
    margin-left: -5px;
}
.address {
    flex: 21;
    display: flex;
    align-items: center;
    gap: 5px;
    height: 22px;
    margin-left: 3px;
    padding: 0 6px 0 2px;
    border: 1px solid;
    border-color: #808080 #fff #fff #808080;
    white-space: nowrap;
}
.arrow {
    width: 5px;
    height: 3px;
}
.drop {
    margin-left: auto;
}
.search {
    flex: 10;
    min-width: 0;
    height: 22px;
    padding: 0 2px;
    border: 2px solid;
    border-color: #606060 #fff #fff #606060;
    border-radius: 0;
    background: #ff0;
    font: inherit;
}
.search::placeholder {
    color: #8c8c30;
}
.content {
    flex: 1;
    display: flex;
    min-height: 0;
    background: #ff0;
}
.side {
    width: 219px;
    display: flex;
    flex-direction: column;
    gap: 7px;
    padding: 17px 0 0 28px;
    line-height: 13px;
}
.side .home {
    margin-bottom: 10px;
}
.side .classic {
    margin-top: 16px;
}
.current {
    position: relative;
    font-weight: bold;
    color: #000;
}
.current::before {
    content: "";
    position: absolute;
    left: -16px;
    top: 4px;
    width: 5px;
    height: 5px;
    border-radius: 50%;
    background: #ffff9c;
}
.categories {
    flex: 1;
    display: flex;
    flex-direction: column;
    gap: 18px;
    padding: 23px 8px 0 0;
}
.category {
    display: flex;
    gap: 10px;
}
.category-icon {
    width: 32px;
    height: 32px;
    margin-bottom: -4px;
}
.category h2 {
    margin: 0;
    padding-top: 1px;
    font-size: 11px;
    line-height: 12px;
    color: #000;
}
.category ul {
    display: flex;
    flex-wrap: wrap;
    margin: 0;
    padding: 0;
    list-style: none;
    line-height: 16px;
}
.category li {
    margin-right: 6px;
    padding-right: 6px;
    border-right: 1px solid #f3efb4;
}
.category li:last-child {
    margin-right: 0;
    padding-right: 0;
    border-right: none;
}
.cursor {
    position: absolute;
    left: 746px;
    top: 255px;
    width: 13px;
    height: 21px;
}
```
